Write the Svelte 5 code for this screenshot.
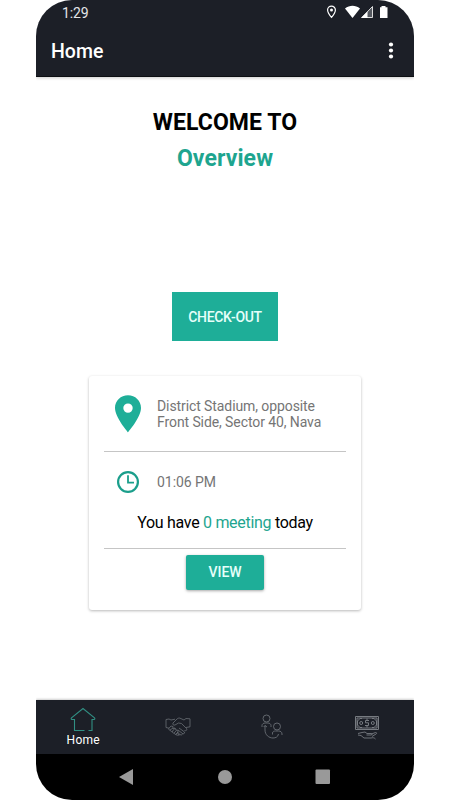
<script>
  let active = 'home';

  const tabs = ['home', 'deals', 'people', 'payments'];
  const address = ['District Stadium, opposite', 'Front Side, Sector 40, Nava'];
  let meetings = 0;
</script>

<div class="phone">
  <header>
    <div class="status">
      <span class="clock">1:29</span>
      <svg width="62" height="14" viewBox="0 0 62 14">
        <path d="M5.500 1.100a3.900 3.900 0 0 0-3.900 3.900c0 2.800 3.900 7.400 3.900 7.400s3.900-4.600 3.900-7.400a3.900 3.900 0 0 0-3.900-3.900z" fill="none" stroke="#fff" stroke-width="1.200" />
        <circle cx="5.500" cy="5" r="1.500" fill="#fff" />
        <path d="M19 3.500c4.500-3.600 10.500-3.600 15 0L26.500 13z" fill="#fff" />
        <path d="M35.800 12.500L46.500 1.500v11z" fill="#555960" stroke="#ddd" />
        <path d="M35 13l6.500-6.600V13z" fill="#fff" />
        <path d="M55.500 1h4v1.300h2V13h-7.500V2.300h1.500z" fill="#fff" />
      </svg>
    </div>
    <div class="toolbar">
      <h1>Home</h1>
      <button class="menu" aria-label="More options">
        <svg width="6" height="18" viewBox="0 0 6 18" fill="#fff">
          <circle cx="3" cy="2.500" r="2.100" />
          <circle cx="3" cy="8.500" r="2.100" />
          <circle cx="3" cy="14.500" r="2.100" />
        </svg>
      </button>
    </div>
  </header>

  <main>
    <div class="welcome">WELCOME TO</div>
    <div class="overview">Overview</div>

    <button class="checkout">CHECK-OUT</button>

    <div class="card">
      <div class="row location">
        <svg width="27" height="38" viewBox="0 0 27 38">
          <path d="M14 .200C6.800.200 1 5.700 1 12.900c0 9.300 13 24.300 13 24.300s13-15 13-24.300C27 5.700 21.200.200 14 .200zm0 8.200a4.700 4.700 0 1 1 0 9.400 4.700 4.700 0 0 1 0-9.400z" fill="#1eae98" />
        </svg>
        <div class="details">
          {#each address as line}
            <div>{line}</div>
          {/each}
        </div>
      </div>
      <div class="row time">
        <svg width="24" height="24" viewBox="0 0 24 24" fill="none" stroke="#1a9e8b">
          <circle cx="12" cy="12" r="9.900" stroke-width="2.200" />
          <path d="M12 5.300v7.400h6" stroke-width="1.800" />
        </svg>
        <div class="details">01:06 PM</div>
      </div>
      <div class="meetings">You have <span>{meetings} meeting</span> today</div>
      <button class="view">VIEW</button>
    </div>
  </main>

  <nav class="tabs">
    {#each tabs as tab}
      <button class="tab" aria-label={tab} on:click={() => (active = tab)}>
        {#if tab === 'home'}
          <svg class="house" width="26" height="25" viewBox="0 0 26 25" fill="none" stroke="#318f83" stroke-width="1.100">
            <path d="M14.500 23.500H4.500V12.500H2c-1 0-1-1-.5-1.700L13 1.500l11.500 9.300c.5.700.5 1.700-.5 1.700h-2v11h-3.500" />
          </svg>
          <span>Home</span>
        {:else if tab === 'deals'}
          <svg width="26" height="20" viewBox="0 0 26 20" fill="none" stroke="#6a6e75" stroke-width=".8">
            <path d="M1 2.500l3-.5 2 1 4-.8M1 2.500v8l3 .7M25 1.800l-4-.3-2 1.500-4-1.800c-1-.4-2 0-3 .8L8 6c-.7 1.500.5 2.500 2 2l3.500-2 3 .5 5 5c1 1.500-.5 2.700-2 2M25 1.800v8l-4 .7M4 11.200L6 9l2 .5v2l2-.5 1 2 2 .3v2l-2.500 2" />
            <path d="M4 11.200c-1 1.200.5 2.500 1.500 1.500l2.500-1.700M5.500 12.700c-.5 1.500 1 2.500 2 1.500l2.500-3M7.500 14.200c-.5 1.600 1 2.500 2 1.500l2-2.500M9.500 15.700c-.5 1.500 1 2.300 2 1.500l1.500-1.700M11 17.500c1 1.300 2.600.8 3-.5M14 11l5.500 4c.5 1.500-1 2.200-2 1.500L13 13M17.500 16.500c0 1.500-1.500 1.800-2.500 1L12 15M15 17.500c-.5 1-1.500.8-2 .2" />
          </svg>
        {:else if tab === 'people'}
          <svg width="24" height="26" viewBox="0 0 24 26" fill="none" stroke="#6a6e75" stroke-width=".9">
            <circle cx="6.500" cy="4.500" r="3.500" />
            <path d="M2 13v-1.500c0-1.500 1.500-2.500 3-2.500h3c1.500 0 3 1 3 2.500V13M5 11.500v4.500c0 5 4 8 8 8 2.500 0 5-1 5.500-4" />
            <path d="M3.700 13L5 11.500 7 13" />
            <circle cx="17" cy="12.500" r="3.500" />
            <path d="M12.500 20.500V19c0-1.500 1.500-2 3-2h3c2 0 3.500 1 3.500 3v1" />
          </svg>
        {:else}
          <svg width="26" height="25" viewBox="0 0 26 25" fill="none" stroke="#777b81">
            <path d="M1.500 1.500h23v13h-23zM3 3h20v10H3z" />
            <path d="M8 3.500H6L3.500 6v4L6 12.500h2M18 3.500h2L22.500 6v4L20 12.500h-2M15 5.500h-3.500v2.300h3v2.700H11M13 3.500v2M13 10.500v2" />
            <circle cx="7.200" cy="8" r="1.500" />
            <circle cx="18.800" cy="8" r="1.500" />
            <path d="M4 18.500l4-1 3-.5 2 1.500h4c1.500 0 1.500 1.500 0 1.500h-4.500M17.500 19l4-1.500c1.500 0 1.500 1 .5 1.500l-4 2.500M4 20l3 .5 3 2.500h7c2-.5 3-.5 4.500 1" stroke-width=".9" />
          </svg>
        {/if}
      </button>
    {/each}
  </nav>

  <div class="system">
    <svg width="16" height="18" viewBox="0 0 16 18"><path d="M1 9L15 1v16z" fill="#999" /></svg>
    <svg width="16" height="18" viewBox="0 0 16 18"><circle cx="8" cy="9" r="7" fill="#999" /></svg>
    <svg width="16" height="18" viewBox="0 0 16 18"><rect x=".5" y="1.500" width="14.500" height="14.500" rx="1" fill="#999" /></svg>
  </div>
</div>

<style>
  :global(body) {
    background: #fff;
  }

  .phone {
    width: 378px;
    height: 800px;
    margin: 0 auto;
    display: flex;
    flex-direction: column;
    border-radius: 36px;
    overflow: hidden;
    font-family: Roboto, "Liberation Sans", sans-serif;
    color: #000;
  }

  button {
    border: 0;
    padding: 0;
    background: none;
    font-family: inherit;
  }

  svg {
    display: block;
    flex: none;
  }

  header {
    height: 77px;
    flex: none;
    background: #1c1f27;
    color: #fff;
    box-sizing: border-box;
    border-bottom: 1px solid #0d0f13;
    box-shadow: 0 1px 3px rgba(0, 0, 0, 0.2);
  }

  .status {
    height: 26px;
    display: flex;
    justify-content: space-between;
    align-items: center;
    padding: 0 26px;
    box-sizing: border-box;
  }

  .status svg {
    margin-top: -2px;
  }

  .clock {
    font-size: 14px;
    letter-spacing: -0.1px;
    color: #e4e5e7;
  }

  .toolbar {
    height: 50px;
    display: flex;
    align-items: center;
    justify-content: space-between;
    padding: 0 20px 0 15px;
  }

  h1 {
    margin: 0;
    font-size: 19.5px;
    font-weight: 500;
    letter-spacing: 0;
  }

  main {
    flex: 1;
    display: flex;
    flex-direction: column;
    align-items: center;
    padding-top: 28px;
    box-sizing: border-box;
  }

  .welcome,
  .overview {
    font-size: 23px;
    line-height: 36px;
    font-weight: 700;
    letter-spacing: 0.1px;
  }

  .overview {
    color: #1ea58f;
  }

  .checkout {
    width: 106px;
    height: 49px;
    margin-top: 115px;
    flex: none;
    background: #1eae98;
    color: #e6fffa;
    font-size: 14px;
    font-weight: 500;
    letter-spacing: -0.3px;
  }

  .card {
    width: 272px;
    height: 234px;
    margin-top: 35px;
    padding: 0 15px;
    box-sizing: border-box;
    display: flex;
    flex-direction: column;
    align-items: center;
    border-radius: 3px;
    box-shadow: 0 1px 3px rgba(0, 0, 0, 0.28);
  }

  .row {
    width: 100%;
    display: flex;
    align-items: center;
    box-sizing: border-box;
  }

  .location {
    height: 76px;
    padding-left: 10px;
    border-bottom: 1px solid #c5c5c5;
  }

  .time {
    height: 60px;
    padding-left: 12px;
  }

  .details {
    margin-left: 16px;
    font-size: 14px;
    line-height: 16px;
    color: #757575;
    letter-spacing: -0.09px;
    white-space: nowrap;
  }

  .time .details {
    margin-left: 17px;
    letter-spacing: -0.05px;
  }

  .meetings {
    width: 100%;
    height: 37px;
    box-sizing: border-box;
    border-bottom: 1px solid #c5c5c5;
    font-size: 16px;
    line-height: 22px;
    letter-spacing: -0.3px;
    text-align: center;
  }

  .meetings span {
    color: #1ea58f;
  }

  .view {
    width: 78px;
    height: 35px;
    margin-top: 5.5px;
    border-radius: 2px;
    background: #1eae98;
    color: #e6fffa;
    font-size: 14px;
    font-weight: 500;
    letter-spacing: -0.1px;
    box-shadow: 0 1px 3px rgba(0, 0, 0, 0.35);
  }

  .tabs {
    height: 54px;
    flex: none;
    display: grid;
    grid-template-columns: repeat(4, 1fr);
    background: #1c1f27;
    box-shadow: 0 -1px 2px rgba(0, 0, 0, 0.2);
  }

  .tab {
    display: flex;
    flex-direction: column;
    align-items: center;
    justify-content: center;
    color: #fff;
    font-size: 12px;
    line-height: 16px;
    letter-spacing: 0.25px;
  }

  .system {
    height: 46px;
    flex: none;
    display: flex;
    justify-content: space-between;
    align-items: center;
    padding: 0 83px 0 82px;
    background: #000;
  }
</style>
